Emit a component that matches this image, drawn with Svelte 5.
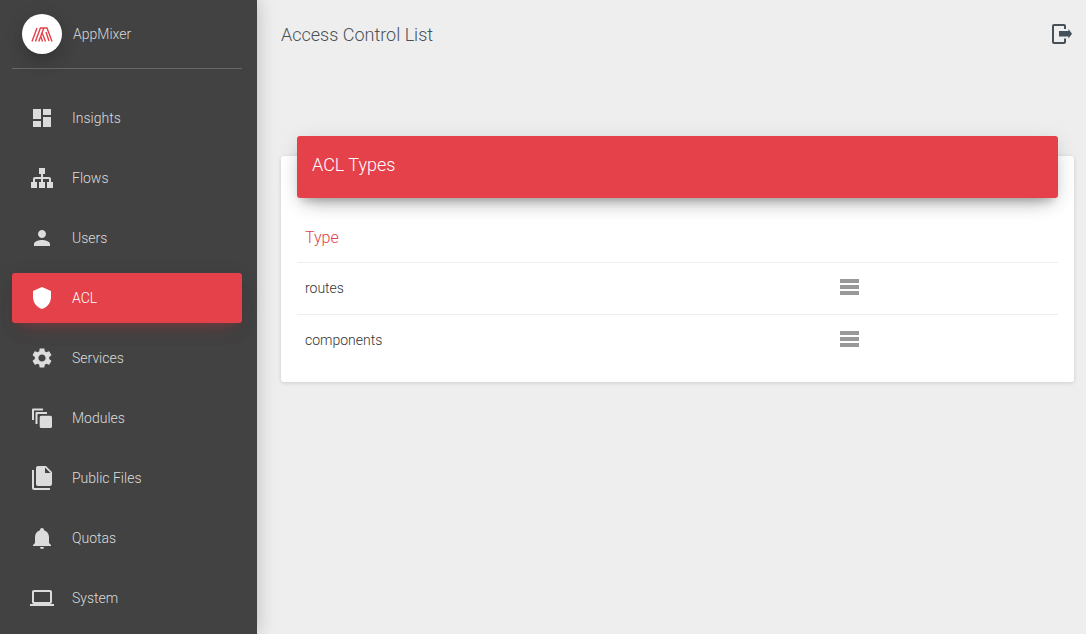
<script>
  const navItems = [
    { label: 'Insights', icon: 'M3 13h8V3H3v10zm0 8h8v-6H3v6zm10 0h8V11h-8v10zm0-18v6h8V3h-8z' },
    { label: 'Flows', icon: 'M9,2V8H11V11H5C3.89,11 3,11.89 3,13V16H1V22H7V16H5V13H11V16H9V22H15V16H13V13H19V16H17V22H23V16H21V13C21,11.89 20.1,11 19,11H13V8H15V2H9Z' },
    { label: 'Users', icon: 'M12 12c2.21 0 4-1.79 4-4s-1.79-4-4-4-4 1.79-4 4 1.79 4 4 4zm0 2c-2.67 0-8 1.34-8 4v2h16v-2c0-2.66-5.33-4-8-4z' },
    { label: 'ACL', active: true, icon: 'M12,1L3,5V11C3,16.55 6.84,21.74 12,23C17.16,21.74 21,16.55 21,11V5L12,1Z' },
    { label: 'Services', icon: 'M19.14,12.94c0.04-0.3,0.06-0.61,0.06-0.94c0-0.32-0.02-0.64-0.07-0.94l2.03-1.58c0.18-0.14,0.23-0.41,0.12-0.61l-1.92-3.32c-0.12-0.22-0.37-0.29-0.59-0.22l-2.39,0.96c-0.5-0.38-1.03-0.7-1.62-0.94L14.4,2.81c-0.04-0.24-0.24-0.41-0.48-0.41h-3.84c-0.24,0-0.43,0.17-0.47,0.41L9.25,5.35C8.66,5.59,8.12,5.92,7.63,6.29L5.24,5.33c-0.22-0.08-0.47,0-0.59,0.22L2.74,8.87C2.62,9.08,2.66,9.34,2.86,9.48l2.03,1.58C4.84,11.36,4.8,11.69,4.8,12s0.02,0.64,0.07,0.94l-2.03,1.58c-0.18,0.14-0.23,0.41-0.12,0.61l1.92,3.32c0.12,0.22,0.37,0.29,0.59,0.22l2.39-0.96c0.5,0.38,1.03,0.7,1.62,0.94l0.36,2.54c0.05,0.24,0.24,0.41,0.48,0.41h3.84c0.24,0,0.44-0.17,0.47-0.41l0.36-2.54c0.59-0.24,1.13-0.56,1.62-0.94l2.39,0.96c0.22,0.08,0.47,0,0.59-0.22l1.92-3.32c0.12-0.22,0.07-0.47-0.12-0.61L19.14,12.94z M12,15.6c-1.98,0-3.6-1.62-3.6-3.6s1.62-3.6,3.6-3.6s3.6,1.62,3.6,3.6S13.98,15.6,12,15.6z' },
    { label: 'Modules', icon: 'M3 2.5h10v2H4v9.5H2V3.5a1 1 0 0 1 1-1zM6.5 6H17v2H7.5v10h-2V7a1 1 0 0 1 1-1zM11.2 9.7h9.3A1.5 1.5 0 0 1 22 11.2V20.5A1.5 1.5 0 0 1 20.5 22H11.2A1.5 1.5 0 0 1 9.7 20.5V11.2A1.5 1.5 0 0 1 11.2 9.7z' },
    { label: 'Public Files', icon: 'M15,7H20.5L15,1.5V7M8,0H16L22,6V18A2,2 0 0,1 20,20H8C6.89,20 6,19.1 6,18V2A2,2 0 0,1 8,0M4,4V22H20V24H4A2,2 0 0,1 2,22V4H4Z' },
    { label: 'Quotas', icon: 'M21,19V20H3V19L5,17V11C5,7.9 7.03,5.17 10,4.29C10,4.19 10,4.1 10,4A2,2 0 0,1 12,2A2,2 0 0,1 14,4C14,4.1 14,4.19 14,4.29C16.97,5.17 19,7.9 19,11V17L21,19M14,21A2,2 0 0,1 12,23A2,2 0 0,1 10,21' },
    { label: 'System', icon: 'M20 18c1.1 0 1.99-.9 1.99-2L22 6c0-1.1-.9-2-2-2H4c-1.1 0-2 .9-2 2v10c0 1.1.9 2 2 2H0v2h24v-2h-4zM4 6h16v10H4V6z' }
  ];

  const aclTypes = ['routes', 'components'];
</script>

<div class="layout">
  <aside class="sidebar">
    <div class="brand">
      <div class="logo">
        <svg width="22" height="15" viewBox="0 0 22 15">
          <g fill="none" stroke="#e4414a" stroke-width="1.4">
            <path d="M1 14.5 6 1M4.4 14.5 9.4 1M7.8 14.5 12.8 1" />
            <path d="M9 1 16 1 21 14.5M11 5.5 14.5 14.5M10 10 11.6 14.5M15 5 18 14" />
          </g>
        </svg>
      </div>
      <span class="brand-name">AppMixer</span>
    </div>
    <nav class="nav">
      {#each navItems as item}
        <a class="nav-item" class:active={item.active} href="#/">
          <svg class="nav-icon" viewBox="0 0 24 24" width="24" height="24"><path d={item.icon} /></svg>
          <span>{item.label}</span>
        </a>
      {/each}
    </nav>
  </aside>

  <main class="main">
    <header class="topbar">
      <h1>Access Control List</h1>
      <svg class="logout" viewBox="0 0 24 24" width="24" height="24">
        <path class="door" d="M15 7V4a1 1 0 0 0-1-1H4a1 1 0 0 0-1 1v16a1 1 0 0 0 1 1h10a1 1 0 0 0 1-1v-3.5" />
        <path d="M9 9h9.5V7l3.5 4.7-3.5 4.7v-2H9z" />
      </svg>
    </header>

    <section class="card">
      <div class="card-header">ACL Types</div>
      <table>
        <thead>
          <tr><th>Type</th><th></th></tr>
        </thead>
        <tbody>
          {#each aclTypes as type}
            <tr>
              <td>{type}</td>
              <td class="action">
                <svg viewBox="0 0 19 16" width="19" height="16">
                  <path d="M0 0h19v4H0zM0 6h19v4H0zM0 12h19v4H0z" />
                </svg>
              </td>
            </tr>
          {/each}
        </tbody>
      </table>
    </section>
  </main>
</div>

<style>
  :global(body) {
    margin: 0;
    background: #eeeeee;
    font-family: Roboto, "Liberation Sans", sans-serif;
    font-weight: 300;
  }

  .layout {
    display: flex;
    height: 634px;
    overflow: hidden;
  }

  .sidebar {
    flex: 0 0 257px;
    background: #424242;
    box-shadow: 0 0 18px rgba(0, 0, 0, 0.22);
    z-index: 1;
    padding: 0 15px 0 12px;
    box-sizing: border-box;
  }

  .brand {
    display: flex;
    align-items: center;
    height: 68px;
    padding-left: 10px;
    border-bottom: 1px solid rgba(180, 180, 180, 0.32);
  }

  .logo {
    width: 40px;
    height: 40px;
    border-radius: 50%;
    background: #fff;
    display: flex;
    align-items: center;
    justify-content: center;
    box-shadow: 0 12px 20px -10px rgba(0, 0, 0, 0.35), 0 4px 20px 0 rgba(0, 0, 0, 0.12);
  }

  .brand-name {
    margin-left: 11px;
    font-size: 14px;
    color: #d8d8d8;
  }

  .nav {
    display: flex;
    flex-direction: column;
    gap: 10px;
    margin-top: 24px;
  }

  .nav-item {
    display: flex;
    align-items: center;
    height: 50px;
    padding-left: 18px;
    border-radius: 3px;
    color: #dcdcdc;
    font-size: 14px;
    text-decoration: none;
  }

  .nav-icon {
    fill: #dcdcdc;
    margin-right: 18px;
    flex: none;
  }

  .nav-item.active {
    background: #e4414a;
    color: #fff;
    box-shadow: 0 12px 20px -10px rgba(228, 65, 74, 0.28), 0 4px 20px 0 rgba(0, 0, 0, 0.12), 0 7px 8px -5px rgba(228, 65, 74, 0.2);
  }

  .nav-item.active .nav-icon {
    fill: #fff;
  }

  .main {
    flex: 1;
    min-width: 0;
    padding: 0 12px 0 24px;
  }

  .topbar {
    display: flex;
    align-items: center;
    justify-content: space-between;
    height: 68px;
  }

  .topbar h1 {
    margin: 0;
    font-size: 18px;
    font-weight: 300;
    color: #495057;
  }

  .logout {
    fill: #455058;
  }

  .logout .door {
    fill: none;
    stroke: #455058;
    stroke-width: 2;
  }

  .card {
    margin-top: 88px;
    background: #fff;
    border-radius: 3px;
    padding: 0 16px 16px;
    height: 226px;
    box-sizing: border-box;
    box-shadow: 0 1px 4px rgba(0, 0, 0, 0.14);
  }

  .card-header {
    position: relative;
    top: -20px;
    height: 62px;
    line-height: 58px;
    padding-left: 15px;
    font-size: 18px;
    color: #fff;
    background: #e4414a;
    border-radius: 3px;
    box-shadow: 0 12px 20px -10px rgba(0, 0, 0, 0.28), 0 4px 20px 0 rgba(0, 0, 0, 0.12), 0 7px 8px -5px rgba(0, 0, 0, 0.2);
    margin-bottom: -20px;
  }

  table {
    width: 100%;
    border-collapse: collapse;
    table-layout: fixed;
  }

  th {
    text-align: left;
    height: 50px;
    padding: 14px 8px 0;
    font-size: 16px;
    font-weight: 300;
    color: #e4414a;
    border-bottom: 1px solid #eeeeee;
  }

  td {
    height: 49px;
    padding: 0 8px 2px;
    font-size: 14px;
    color: #333;
    border-bottom: 1px solid #eeeeee;
  }

  tbody tr:last-child td {
    border-bottom: none;
  }

  .action svg {
    display: block;
    fill: #999;
    margin-top: -1px;
  }

  th:first-child,
  td:first-child {
    width: 519px;
  }
</style>
